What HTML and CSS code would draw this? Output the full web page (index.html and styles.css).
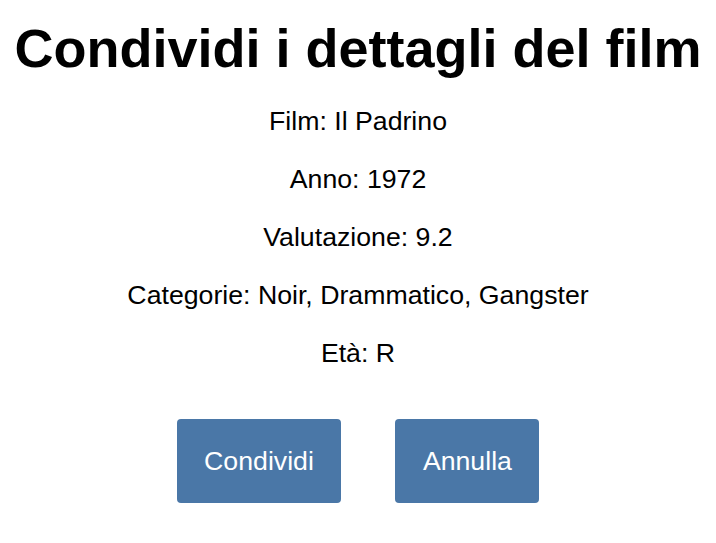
FILE: index.html
```html
<!DOCTYPE html>
<html lang="it">
<head>
<meta charset="utf-8">
<title>Condividi i dettagli del film</title>
<link rel="stylesheet" href="styles.css">
</head>
<body>
<main class="share">
  <h1 class="share-title">Condividi i dettagli del film</h1>
  <p class="share-line">Film: Il Padrino</p>
  <p class="share-line">Anno: 1972</p>
  <p class="share-line">Valutazione: 9.2</p>
  <p class="share-line">Categorie: Noir, Drammatico, Gangster</p>
  <p class="share-line">Età: R</p>
  <div class="share-actions">
    <button class="btn" type="button">Condividi</button>
    <button class="btn" type="button">Annulla</button>
  </div>
</main>
</body>
</html>
```
FILE: styles.css
```css
html, body {
  margin: 0;
  padding: 0;
  background: #ffffff;
}

body {
  font-family: "Liberation Sans", Arial, sans-serif;
  color: #000000;
  font-size: 26.7px;
}

.share {
  text-align: center;
  padding-top: 17px;
}

.share-title {
  font-size: 54px;
  font-weight: bold;
  line-height: 62px;
  margin: 0;
}

.share-line {
  line-height: 31px;
  margin: 27px 0;
}

.share-actions {
  display: flex;
  justify-content: center;
  gap: 54px;
  margin-top: 50px;
}

.btn {
  font-family: "Liberation Sans", Arial, sans-serif;
  font-size: 26.7px;
  line-height: 31px;
  padding: 26.5px 27.5px;
  border: none;
  border-radius: 4px;
  background: #4a77a7;
  color: #ffffff;
  cursor: pointer;
}
```
